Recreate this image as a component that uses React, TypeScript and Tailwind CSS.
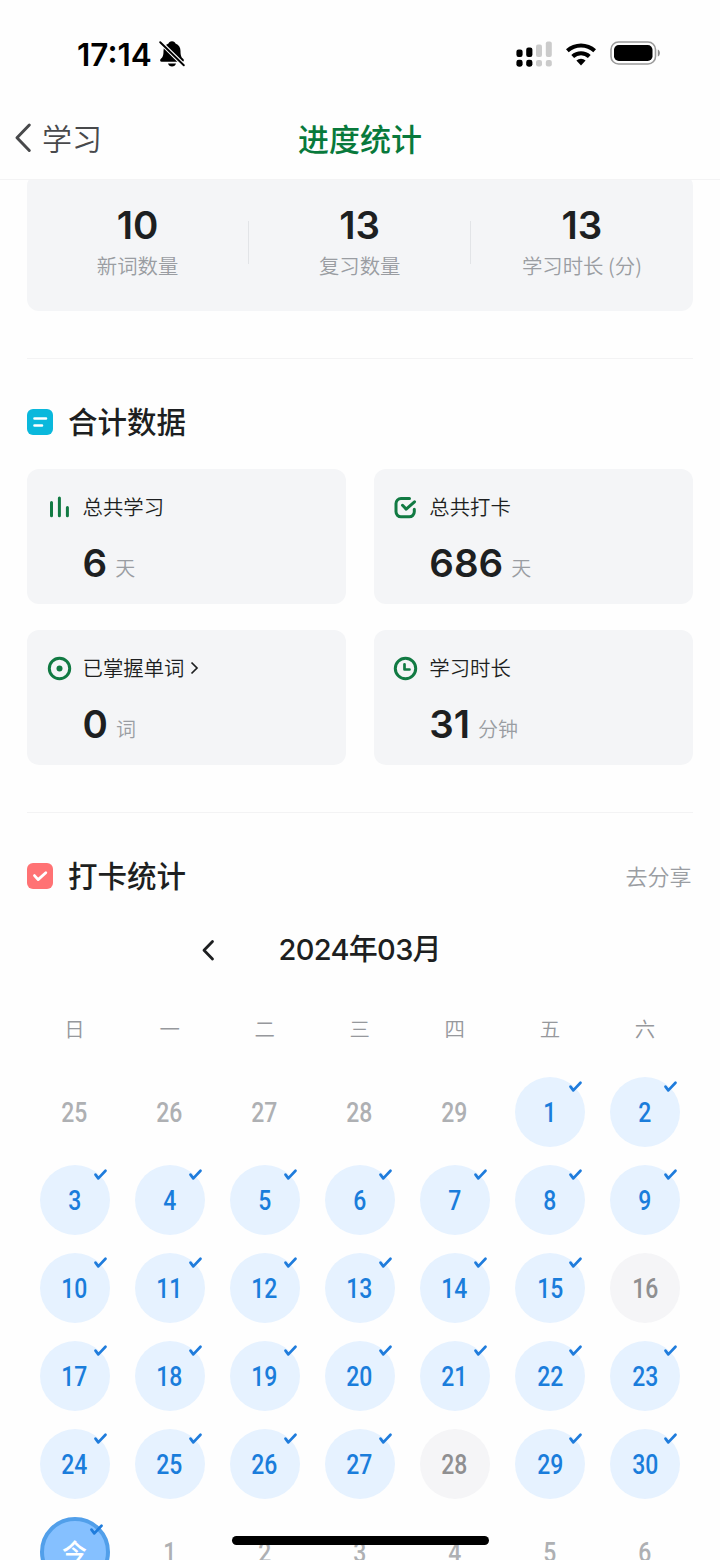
import React from "react";

type Day = { label: string; state: "out" | "done" | "missed" | "today" };

const done = (n: number): Day => ({ label: String(n), state: n === 16 || n === 28 ? "missed" : "done" });

const days: Day[] = [
  ...[25, 26, 27, 28, 29].map((n): Day => ({ label: String(n), state: "out" })),
  ...Array.from({ length: 30 }, (_, i) => done(i + 1)),
  { label: "今", state: "today" },
  ...[1, 2, 3, 4, 5, 6].map((n): Day => ({ label: String(n), state: "out" })),
];

const cellStyle: Record<Day["state"], string> = {
  out: "text-[#aeb0b3]",
  done: "bg-[#e6f2ff] text-[#1a7ddb]",
  missed: "bg-[#f5f5f7] text-[#8f8f91]",
  today: "bg-[#85c0ff] border-[4px] border-[#519fea] text-white",
};

function DayCell({ day }: { day: Day }) {
  const today = day.state === "today";
  return (
    <div className="flex h-[88px] justify-center">
      <div className={`relative flex size-[70px] items-center justify-center rounded-full ${cellStyle[day.state]}`}>
        {today ? (
          <span className="-mt-px text-[25px] leading-none font-medium">{day.label}</span>
        ) : (
          <span className="mt-[3px] scale-x-[0.85] font-[Roboto] text-[27px] leading-none font-medium">{day.label}</span>
        )}
        {(today || day.state === "done") && (
          <svg
            className={today ? "absolute top-[2px] right-[2px]" : "absolute top-[3px] right-[2px]"}
            width="15"
            height="14"
            viewBox="0 0 15 14"
            fill="none"
            stroke="#1f7cdc"
            strokeWidth="2.7"
            strokeLinecap="round"
            strokeLinejoin="round"
          >
            <path d="M2.500 6.600 5.300 10.400 12.500 2.800" />
          </svg>
        )}
      </div>
    </div>
  );
}

function StatusBar() {
  return (
    <div className="flex h-[108px] items-center justify-between pr-[59px] pl-[77px] text-black">
      <div className="flex items-center gap-[7px]">
        <span className="pt-px font-[Inter] text-[31.500px] leading-none font-semibold">17:14</span>
        <svg width="26" height="28" viewBox="0 0 26 28">
          <path
            d="M13 1.200c-2 0-3.200 1-3.500 2.300C6 4.700 4.500 7.500 4.500 11c0 4.500-.8 6.300-2.800 8C.7 20 1 21.800 2.700 21.800h20.600c1.700 0 2-1.800 1-2.800-2-1.700-2.800-3.500-2.800-8 0-3.500-1.500-6.300-5-7.500C16.200 2.200 15 1.200 13 1.200Z"
            fill="currentColor"
          />
          <path d="M9 23.500h8c-.5 1.900-2 3-4 3s-3.500-1.100-4-3Z" fill="currentColor" />
          <path d="M0 .9 26 26.500" stroke="white" strokeWidth="4.200" />
          <path d="M1.200 2.200 24.800 25.300" stroke="currentColor" strokeWidth="1.900" strokeLinecap="round" />
        </svg>
      </div>
      <div className="flex items-center">
        <svg width="36" height="26" viewBox="0 0 36 26">
          <g fill="currentColor">
            <rect x="0.400" y="8.500" width="6.200" height="7.500" rx="2.200" />
            <rect x="10.200" y="6.500" width="6.200" height="9.500" rx="2.200" />
            <rect x="0.400" y="18.700" width="6.200" height="7" rx="2.400" />
            <rect x="10.200" y="18.700" width="6.200" height="7" rx="2.400" />
          </g>
          <g fill="#cbcbcb">
            <rect x="20" y="3.500" width="6" height="12.500" rx="2" />
            <rect x="29.800" y="0.500" width="6" height="15.500" rx="2" />
            <rect x="20" y="18.900" width="6" height="6.600" rx="2.200" />
            <rect x="29.800" y="18.900" width="6" height="6.600" rx="2.200" />
          </g>
        </svg>
        <svg className="ml-[13px] -mt-px" width="32" height="24" viewBox="0 0 32 24">
          <path d="M1 7.300a22 22 0 0 1 30 0l-2.700 3a18 18 0 0 0-24.600 0Z" fill="currentColor" />
          <path d="M6.300 13a14.400 14.400 0 0 1 19.400 0l-2.800 3a10.300 10.300 0 0 0-13.800 0Z" fill="currentColor" />
          <path d="M11.400 18.500a7 7 0 0 1 9.200 0L16 23.500Z" fill="currentColor" />
        </svg>
        <svg className="ml-[13px] -mt-[2px]" width="51" height="24" viewBox="0 0 51 24">
          <rect x="1" y="1" width="44.500" height="22" rx="7.500" fill="none" stroke="#9b9b9b" strokeWidth="1.600" />
          <rect x="4" y="4" width="38.500" height="16" rx="4.800" fill="currentColor" />
          <path d="M47.800 8.500c2.800 1 2.800 6 0 7Z" fill="#8b8b8b" />
        </svg>
      </div>
    </div>
  );
}

function NavBar() {
  return (
    <div className="grid h-[72px] grid-cols-3 items-center border-b border-[#f3f3f4] pb-[13px]">
      <div className="flex items-center pl-[14px] text-[#48494b]">
        <svg width="18" height="32" viewBox="0 0 18 32" fill="none" stroke="currentColor" strokeWidth="3" strokeLinecap="round" strokeLinejoin="round">
          <path d="M15.300 4 3 16.700 15.300 29.500" />
        </svg>
        <span className="ml-[10px] text-[30px] leading-none font-[350]">学习</span>
      </div>
      <h1 className="text-center text-[31px] leading-none font-medium whitespace-nowrap text-[#08793b]">进度统计</h1>
    </div>
  );
}

function Summary({ value, label }: { value: string; label: string }) {
  return (
    <div className="flex flex-col items-center pt-[31px]">
      <span className="font-[Inter] text-[38.500px] leading-10 font-semibold">{value}</span>
      <span className="mt-[5px] text-[20.400px] leading-[30px] font-[350] text-[#9a9da2]">{label}</span>
    </div>
  );
}

function Heading({ icon, children, action }: { icon: React.ReactNode; children: string; action?: string }) {
  return (
    <div className="mt-[43px] flex h-10 items-center">
      {icon}
      <h2 className="ml-[15px] pb-[2px] text-[29.500px] leading-none font-medium">{children}</h2>
      {action && <span className="ml-auto pr-px pb-[3px] text-[22px] leading-none font-[350] text-[#9a9da2]">{action}</span>}
    </div>
  );
}

function StatCard(props: { icon: React.ReactNode; title: string; value: string; unit: string; arrow?: boolean }) {
  return (
    <div className="flex h-[135px] gap-[11px] rounded-xl bg-[#f4f5f7] pt-[23px] pl-[19.500px]">
      <div className="flex h-[30px] items-center text-[#117a43]">{props.icon}</div>
      <div>
        <div className="flex h-[30px] items-center text-[20.400px] leading-none">
          <span className="pb-[2px] font-[350]">{props.title}</span>
          {props.arrow && (
            <svg className="ml-[6px]" width="9" height="14" viewBox="0 0 9 14" fill="none" stroke="currentColor" strokeWidth="1.700">
              <path d="m1.500 1.500 5.500 5.500-5.500 5.500" />
            </svg>
          )}
        </div>
        <div className="mt-[21px] flex">
          <span className="font-[Inter] text-[38.500px] leading-10 font-semibold">{props.value}</span>
          <span className="ml-[8px] pt-[5px] text-[20px] leading-10 font-[350] text-[#9a9da2]">{props.unit}</span>
        </div>
      </div>
    </div>
  );
}

const iconProps = {
  width: 25,
  height: 25,
  viewBox: "0 0 25 25",
  fill: "none",
  stroke: "currentColor",
  strokeWidth: 3,
  strokeLinecap: "round" as const,
  strokeLinejoin: "round" as const,
};

const BarsIcon = () => (
  <svg {...iconProps}>
    <path d="M4.500 7.500v13.300M12.400 3v17.800M20.400 12.500v8.300" />
  </svg>
);

const CheckInIcon = () => (
  <svg {...iconProps}>
    <path d="M16.500 3.500H8A5 5 0 0 0 3 8.500v8.300a5 5 0 0 0 5 5h8.300a5 5 0 0 0 5-5v-2.500" />
    <path d="m9.500 10.300 3.700 3.800 8.300-7.300" />
  </svg>
);

const TargetIcon = () => (
  <svg {...iconProps}>
    <circle cx="12.500" cy="12.500" r="10.200" />
    <circle cx="12.500" cy="12.500" r="3" fill="currentColor" stroke="none" />
  </svg>
);

const ClockIcon = () => (
  <svg {...iconProps}>
    <circle cx="12.500" cy="12.500" r="10.200" />
    <path d="M11.500 8.300v5.200h5" strokeWidth="2.700" />
  </svg>
);

export default function App() {
  return (
    <div className="relative h-[1560px] w-[720px] overflow-hidden bg-[#fefefe] font-['Noto_Sans_CJK_SC',sans-serif] text-[#1d1f21]">
      <StatusBar />
      <NavBar />
      <main className="h-[1380px] overflow-hidden pr-[27.500px] pl-[27px]">
        <section className="-mt-[6px] grid h-[137px] grid-cols-[1fr_1px_1fr_1px_1fr] rounded-xl bg-[#f4f5f7]">
          <Summary value="10" label="新词数量" />
          <div className="mt-[47px] h-[43px] bg-[#e2e4e7]" />
          <Summary value="13" label="复习数量" />
          <div className="mt-[47px] h-[43px] bg-[#e2e4e7]" />
          <Summary value="13" label="学习时长 (分)" />
        </section>
        <hr className="mt-[47px] border-[#f3f3f4]" />

        <Heading
          icon={
            <svg width="26" height="26" viewBox="0 0 26 26">
              <rect width="26" height="26" rx="6" fill="#0ab8dc" />
              <path d="M7.500 9.500h11.500M7.500 16.500h7.500" stroke="white" strokeWidth="2.600" strokeLinecap="round" />
            </svg>
          }
        >
          合计数据
        </Heading>
        <section className="mt-[27px] grid grid-cols-2 gap-x-7 gap-y-[26px]">
          <StatCard icon={<BarsIcon />} title="总共学习" value="6" unit="天" />
          <StatCard icon={<CheckInIcon />} title="总共打卡" value="686" unit="天" />
          <StatCard icon={<TargetIcon />} title="已掌握单词" value="0" unit="词" arrow />
          <StatCard icon={<ClockIcon />} title="学习时长" value="31" unit="分钟" />
        </section>
        <hr className="mt-[47px] border-[#f3f3f4]" />

        <Heading
          action="去分享"
          icon={
            <svg width="26" height="26" viewBox="0 0 26 26" fill="none">
              <rect width="26" height="26" rx="6" fill="#ff7274" />
              <path d="m7.500 12.600 3.600 4 7.700-6.800" stroke="white" strokeWidth="2.800" strokeLinecap="round" strokeLinejoin="round" />
            </svg>
          }
        >
          打卡统计
        </Heading>
        <div className="mt-[33px] grid h-10 grid-cols-[1fr_auto_1fr] items-center">
          <svg className="mt-[2px] mr-[64px] justify-self-end" width="14" height="22" viewBox="0 0 14 22" fill="none" stroke="currentColor" strokeWidth="2.800" strokeLinecap="round" strokeLinejoin="round">
            <path d="M11.500 2.500 3 11.300l8.500 8.700" />
          </svg>
          <span className="font-['Inter','Noto_Sans_CJK_SC',sans-serif] text-[29px] leading-none font-medium tracking-[-0.700px]">2024年03月</span>
        </div>
        <div className="mt-[39px] grid h-10 grid-cols-7 items-center text-center text-[20.400px] leading-none font-[350] text-[#96989c]">
          {["日", "一", "二", "三", "四", "五", "六"].map((d) => (
            <span key={d}>{d}</span>
          ))}
        </div>
        <div className="mt-[29px] grid grid-cols-7">
          {days.map((day, i) => (
            <DayCell key={i} day={day} />
          ))}
        </div>
      </main>
      <div className="absolute bottom-[15px] left-[232px] h-[9px] w-[257px] rounded-full bg-black" />
    </div>
  );
}
